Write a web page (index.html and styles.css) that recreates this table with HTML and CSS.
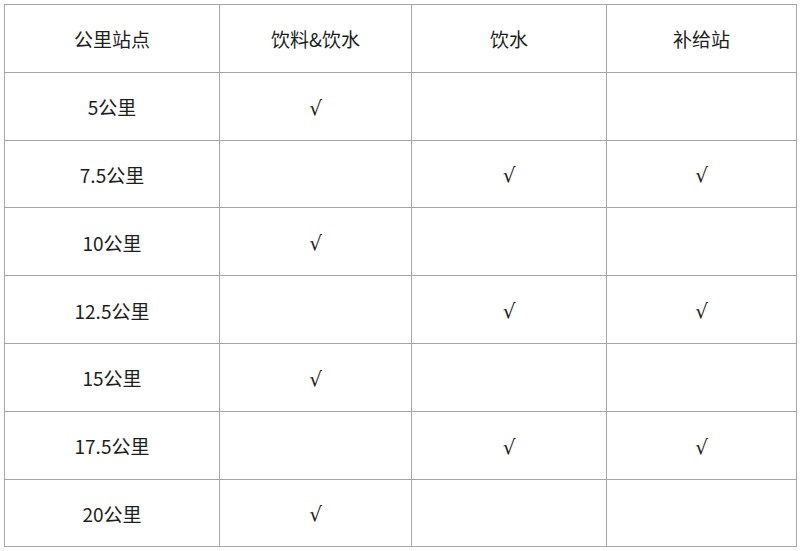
FILE: index.html
```html
<!DOCTYPE html>
<html lang="zh">
<head>
<meta charset="utf-8">
<link rel="stylesheet" href="styles.css">
</head>
<body>
<table class="stations">
  <colgroup>
    <col class="c1"><col class="c2"><col class="c3"><col class="c4">
  </colgroup>
  <tr><td>公里站点</td><td>饮料&amp;饮水</td><td>饮水</td><td>补给站</td></tr>
  <tr><td>5公里</td><td><span class="tick">√</span></td><td></td><td></td></tr>
  <tr><td>7.5公里</td><td></td><td><span class="tick">√</span></td><td><span class="tick">√</span></td></tr>
  <tr><td>10公里</td><td><span class="tick">√</span></td><td></td><td></td></tr>
  <tr><td>12.5公里</td><td></td><td><span class="tick">√</span></td><td><span class="tick">√</span></td></tr>
  <tr><td>15公里</td><td><span class="tick">√</span></td><td></td><td></td></tr>
  <tr><td>17.5公里</td><td></td><td><span class="tick">√</span></td><td><span class="tick">√</span></td></tr>
  <tr><td>20公里</td><td><span class="tick">√</span></td><td></td><td></td></tr>
</table>
</body>
</html>
```
FILE: styles.css
```css
html, body {
  margin: 0;
  padding: 0;
  background: #ffffff;
}
body {
  padding: 4px 0 0 4px;
  font-family: "Noto Sans CJK SC", "Noto Sans", sans-serif;
  color: #1e1e1e;
}
.stations {
  border-collapse: collapse;
  table-layout: fixed;
  width: 792px;
}
.c1 { width: 215px; }
.c2 { width: 192px; }
.c3 { width: 195px; }
.c4 { width: 190px; }
.stations tr {
  height: 67.8px;
}
.stations td {
  border: 1.5px solid #a6a6a6;
  padding: 2px 0 0 0;
  text-align: center;
  vertical-align: middle;
  font-size: 19px;
  line-height: 24px;
}
.tick {
  font-family: "DejaVu Sans", sans-serif;
  font-size: 20px;
}
```
